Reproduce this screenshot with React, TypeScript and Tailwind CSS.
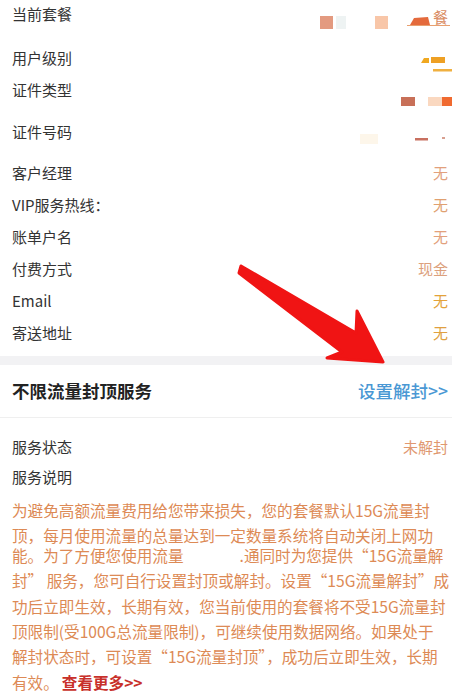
import React from "react";

const FONT = { fontFamily: '"Noto Sans CJK SC", "Noto Sans", sans-serif' };

function Blob1() {
  return (
    <svg width="134" height="32" viewBox="318 -2 134 32" className="block">
      <rect x="320" y="16" width="13" height="13" fill="#e39a80" />
      <rect x="336" y="16" width="10" height="13" fill="#eef3f3" />
      <rect x="375" y="16" width="13" height="13" fill="#f8c6a8" />
      <polygon points="410,25 414,18 428,17 430,25" fill="#e46a3c" />
      <line x1="407" y1="25.5" x2="450" y2="25.5" stroke="#e8a070" strokeWidth="1.2" />
      <text x="433" y="23" fontSize="15" fill="#d98a60" style={FONT}>餐</text>
    </svg>
  );
}

function Blob2() {
  return (
    <svg width="134" height="32" viewBox="318 42 134 32" className="block">
      <polygon points="421,63 424,58 429,58 429,63" fill="#f0a820" />
      <rect x="431" y="57" width="14" height="6" fill="#eea024" />
      <rect x="433" y="69" width="19" height="2.5" fill="#f0b040" />
    </svg>
  );
}

function Blob3() {
  return (
    <svg width="134" height="32" viewBox="318 74 134 32" className="block">
      <rect x="401" y="97" width="14" height="14" fill="#c87058" />
      <rect x="428" y="97" width="14" height="14" fill="#fad8c0" />
      <polygon points="442,97 452,97 452,110 442,111" fill="#f06a30" />
    </svg>
  );
}

function Blob4() {
  return (
    <svg width="134" height="32" viewBox="318 116 134 32" className="block">
      <rect x="360" y="134" width="18" height="10" fill="#fdf6ea" />
      <rect x="415" y="138" width="13" height="2.5" fill="#c87060" />
      <rect x="442" y="137" width="3" height="2" fill="#d8a090" />
    </svg>
  );
}

type Row = { label: string; value?: string; color?: string; blob?: React.ReactNode; mt: string };

const rows: Row[] = [
  { label: "当前套餐", blob: <Blob1 />, mt: "-mt-[2px]" },
  { label: "用户级别", blob: <Blob2 />, mt: "mt-[12px]" },
  { label: "证件类型", blob: <Blob3 />, mt: "mt-0" },
  { label: "证件号码", blob: <Blob4 />, mt: "mt-[10px]" },
  { label: "客户经理", value: "无", color: "text-[#e2a07c]", mt: "mt-[9px]" },
  { label: "VIP服务热线：", value: "无", color: "text-[#e0a070]", mt: "mt-0" },
  { label: "账单户名", value: "无", color: "text-[#e2a07c]", mt: "mt-0" },
  { label: "付费方式", value: "现金", color: "text-[#dca07c]", mt: "mt-0" },
  { label: "Email", value: "无", color: "text-[#e3a23a]", mt: "mt-0" },
  { label: "寄送地址", value: "无", color: "text-[#e0a040]", mt: "mt-0" },
];

export default function App() {
  return (
    <div className="relative w-[452px] h-[694px] overflow-hidden bg-white" style={FONT}>
      <div className="flex flex-col">
        {rows.map((r) => (
          <div
            key={r.label}
            className={`${r.mt} flex h-[32px] items-center justify-between pl-[12px] pr-[4px] text-[15px] text-[#333333]`}
          >
            <span className="whitespace-nowrap">{r.label}</span>
            {r.blob ? (
              <div className="-mr-[4px]">{r.blob}</div>
            ) : (
              <span className={`${r.color} whitespace-nowrap`}>{r.value}</span>
            )}
          </div>
        ))}

        <div className="mt-[7px] h-[9px] bg-[#f2f2f4]" />

        <div className="flex h-[53px] items-center justify-between border-b border-[#efefef] pl-[12px] pr-[4px]">
          <span className="text-[17.5px] font-bold text-[#222222]">不限流量封顶服务</span>
          <span className="text-[17.5px] font-medium text-[#4a98d4]">设置解封&gt;&gt;</span>
        </div>

        <div className="mt-[14px] flex h-[30px] items-center justify-between pl-[12px] pr-[4px] text-[15px] text-[#333333]">
          <span>服务状态</span>
          <span className="text-[#e09870]">未解封</span>
        </div>
        <div className="flex h-[30px] items-center pl-[12px] pr-[4px] text-[15px] text-[#333333]">
          <span>服务说明</span>
        </div>

        <div className="mt-[6px] pl-[12px] text-[15.6px] leading-[25.4px] text-[#dd8a55]">
          <div className="whitespace-nowrap">为避免高额流量费用给您带来损失，您的套餐默认15G流量封</div>
          <div className="whitespace-nowrap">顶，每月使用流量的总量达到一定数量系统将自动关闭上网功</div>
          <div className="-mt-[6px] whitespace-nowrap">
            能。为了方便您使用流量<span className="inline-block w-[56px]" />.通同时为您提供“15G流量解
          </div>
          <div className="whitespace-nowrap">封” 服务，您可自行设置封顶或解封。设置“15G流量解封”成</div>
          <div className="whitespace-nowrap">功后立即生效，长期有效，您当前使用的套餐将不受15G流量封</div>
          <div className="whitespace-nowrap">顶限制(受100G总流量限制)，可继续使用数据网络。如果处于</div>
          <div className="whitespace-nowrap">解封状态时，可设置“15G流量封顶”，成功后立即生效，长期</div>
          <div className="whitespace-nowrap">
            有效。<span className="ml-[3px] font-bold text-[#c8302a]">查看更多&gt;&gt;</span>
          </div>
        </div>
      </div>

      <svg
        className="pointer-events-none absolute left-0 top-0"
        width="452"
        height="694"
        viewBox="0 0 452 694"
      >
        <polygon
          points="241,266 356,333 357,311 383,362 327,358 342,352 239,273"
          fill="#f01414"
          stroke="#f01414"
          strokeWidth="3"
          strokeLinejoin="round"
        />
      </svg>
    </div>
  );
}
